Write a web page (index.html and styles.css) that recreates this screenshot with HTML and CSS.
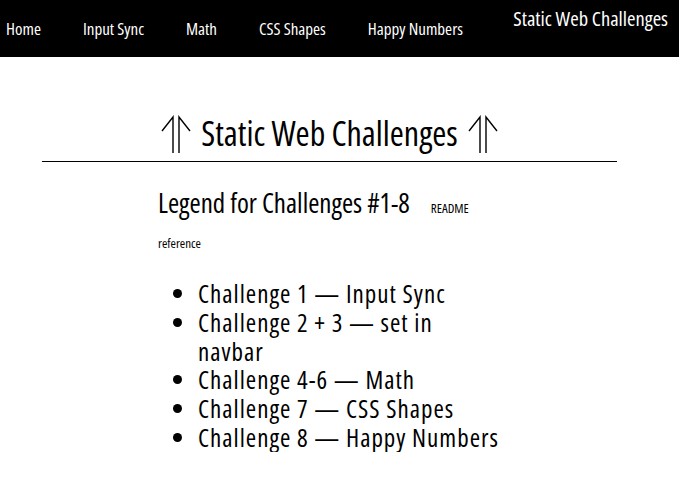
FILE: index.html
```html
<!DOCTYPE html>
<html lang="en">
<head>
<meta charset="utf-8">
<title>Static Web Challenges</title>
<link rel="stylesheet" href="styles.css">
</head>
<body>
<nav class="navbar">
  <ul class="nav-links">
    <li><a href="#">Home</a></li>
    <li><a href="#">Input Sync</a></li>
    <li><a href="#">Math</a></li>
    <li><a href="#">CSS Shapes</a></li>
    <li><a href="#">Happy Numbers</a></li>
  </ul>
  <span class="brand">Static Web Challenges</span>
</nav>
<main class="page">
  <h1 class="title">
    <svg class="arrow" viewBox="0 0 30 38" aria-hidden="true"><path d="M12 38V2L1 16M18 38V2l11 14" fill="none" stroke="#000" stroke-width="1.4"/></svg>
    <span>Static Web Challenges</span>
    <svg class="arrow" viewBox="0 0 30 38" aria-hidden="true"><path d="M12 38V2L1 16M18 38V2l11 14" fill="none" stroke="#000" stroke-width="1.4"/></svg>
  </h1>
  <section class="legend">
    <h2 class="legend-title">Legend for Challenges #1-8 <a class="readme" href="#">README</a></h2>
    <p class="ref">reference</p>
    <ul class="challenges">
      <li>Challenge 1 — Input Sync</li>
      <li>Challenge 2 + 3 — set in navbar</li>
      <li>Challenge 4-6 — Math</li>
      <li>Challenge 7 — CSS Shapes</li>
      <li>Challenge 8 — Happy Numbers</li>
    </ul>
  </section>
</main>
</body>
</html>
```
FILE: styles.css
```css
* { box-sizing: border-box; }
html, body { margin: 0; padding: 0; background: #fff; }
body {
  font-family: "Open Sans", "Roboto", sans-serif;
  font-stretch: 75%;
  color: #000;
}
.navbar {
  background: #000;
  height: 57px;
  display: flex;
  justify-content: space-between;
  align-items: flex-start;
  padding: 0 11px 0 6px;
}
.nav-links {
  list-style: none;
  margin: 0;
  padding: 0;
  display: flex;
  gap: 42px;
  height: 57px;
  align-items: center;
}
.nav-links li { white-space: nowrap; }
.nav-links a {
  color: #fff;
  text-decoration: none;
  font-size: 17px;
  line-height: 24px;
}
.brand {
  color: #fff;
  font-size: 20.5px;
  line-height: 24px;
  margin-top: 6px;
  white-space: nowrap;
}
.page {
  margin: 0 62px 0 42px;
}
.title {
  margin: 56px 0 0;
  display: flex;
  justify-content: center;
  align-items: center;
  gap: 10px;
  font-weight: normal;
  font-size: 34px;
  line-height: 40px;
  padding-bottom: 8px;
  border-bottom: 1px solid #000;
}
.arrow {
  width: 30px;
  height: 38px;
  margin-top: 2px;
}
.legend {
  padding-left: 116px;
  width: 458px;
}
.legend-title {
  font-weight: normal;
  font-size: 27px;
  line-height: 30px;
  margin: 26px 0 0;
}
.readme {
  color: #000;
  text-decoration: none;
  font-size: 13px;
  margin-left: 16px;
}
.ref {
  font-size: 13px;
  margin: 11px 0 0;
}
.challenges {
  margin: 27px 0 0;
  padding-left: 40px;
  font-size: 25px;
  line-height: 28.8px;
  letter-spacing: 1px;
}
```
